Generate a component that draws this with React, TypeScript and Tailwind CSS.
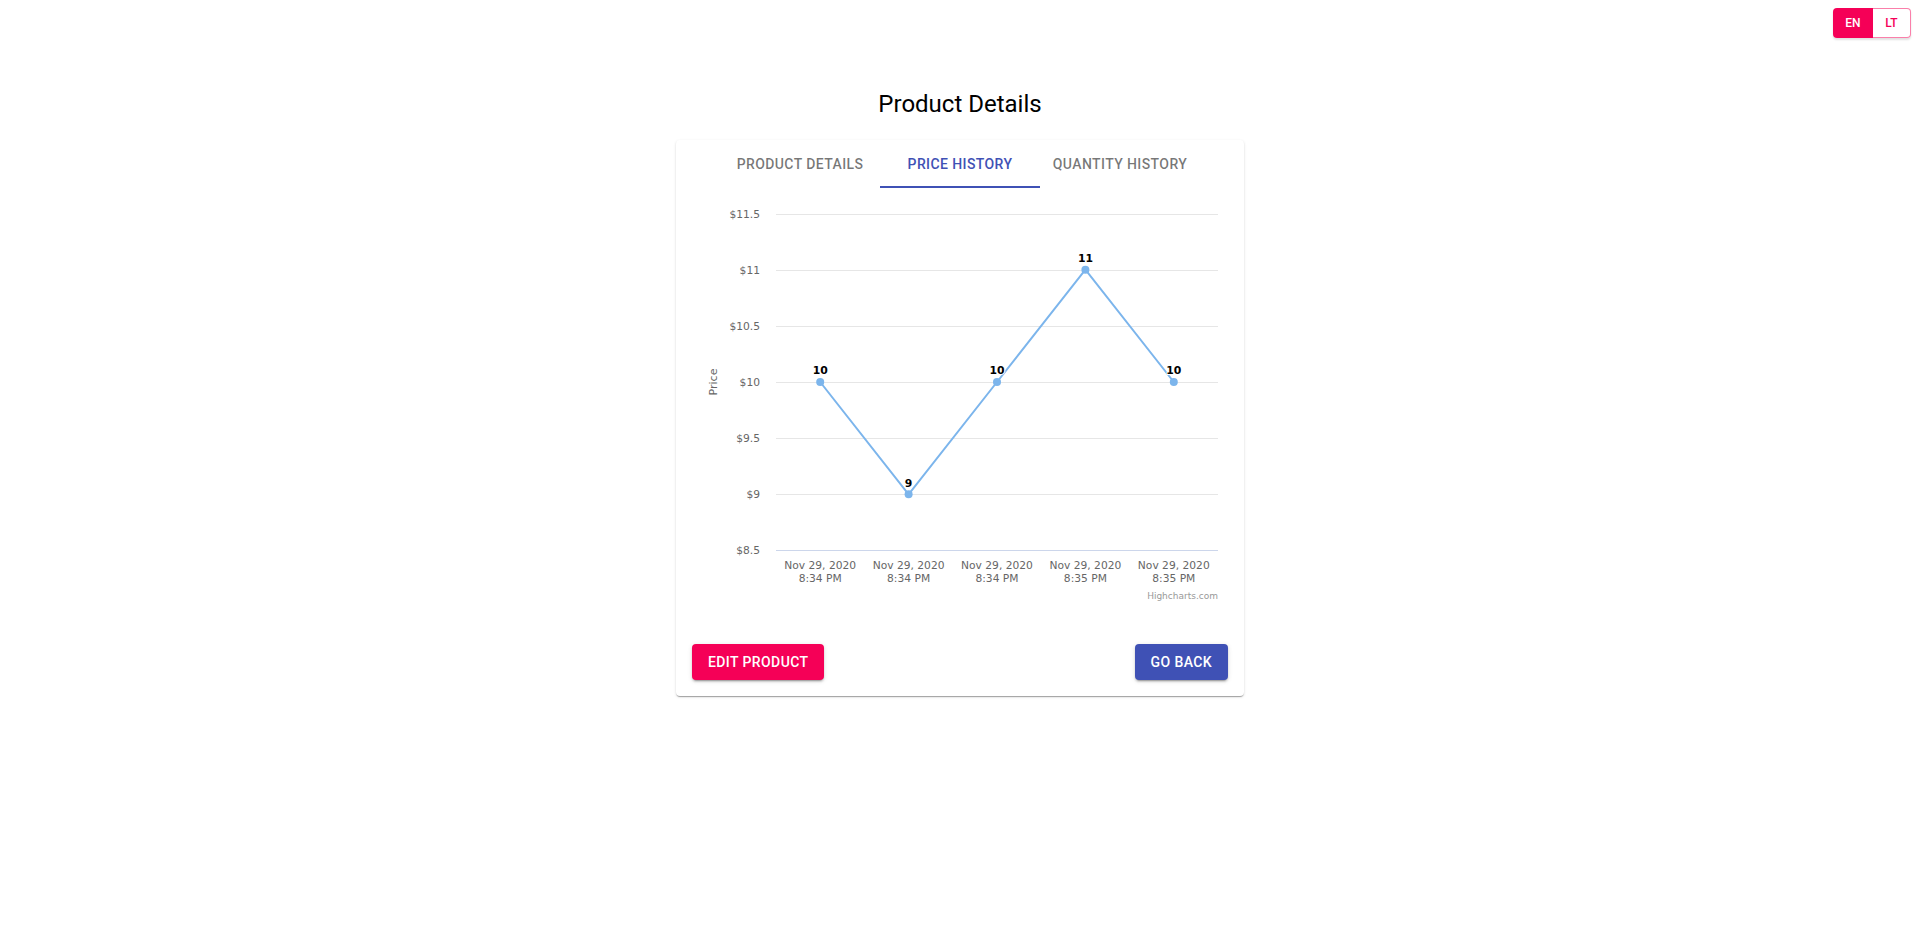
import React from "react";

const PLOT_LEFT = 84;
const PLOT_RIGHT = 526;
const yOf = (v: number) => 9.5 + (11.5 - v) * 112.33;
const xOf = (i: number) => PLOT_LEFT + 44.2 + i * 88.4;

const ticks = [11.5, 11, 10.5, 10, 9.5, 9, 8.5];
const points = [
  { v: 10, date: "Nov 29, 2020", time: "8:34 PM" },
  { v: 9, date: "Nov 29, 2020", time: "8:34 PM" },
  { v: 10, date: "Nov 29, 2020", time: "8:34 PM" },
  { v: 11, date: "Nov 29, 2020", time: "8:35 PM" },
  { v: 10, date: "Nov 29, 2020", time: "8:35 PM" },
];

const chartFont = '"DejaVu Sans", Verdana, sans-serif';

const PriceChart = () => {
  const path = points.map((p, i) => `${i === 0 ? "M" : "L"} ${xOf(i)} ${yOf(p.v)}`).join(" ");
  return (
    <svg width={536} height={400} viewBox="0 0 536 400" style={{ fontFamily: chartFont }}>
      {ticks.map((t) => (
        <g key={t}>
          <line
            x1={PLOT_LEFT}
            x2={PLOT_RIGHT}
            y1={Math.round(yOf(t)) + 0.5}
            y2={Math.round(yOf(t)) + 0.5}
            stroke={t === 8.5 ? "#ccd6eb" : "#e6e6e6"}
            strokeWidth={1}
          />
          <text x={68} y={yOf(t) + 4} textAnchor="end" fontSize="10.7" fill="#666666">
            ${t}
          </text>
        </g>
      ))}
      <text
        x={0}
        y={0}
        transform={`translate(25 ${yOf(10)}) rotate(-90)`}
        textAnchor="middle"
        fontSize="11"
        fill="#666666"
      >
        Price
      </text>
      <path d={path} fill="none" stroke="#7cb5ec" strokeWidth={2} strokeLinejoin="round" />
      {points.map((p, i) => (
        <g key={i}>
          <circle cx={xOf(i)} cy={yOf(p.v)} r={4} fill="#7cb5ec" />
          <text
            x={xOf(i)}
            y={yOf(p.v) - 7.5}
            textAnchor="middle"
            fontSize="10.8"
            fontWeight="bold"
            fill="#000000"
            stroke="#ffffff"
            strokeWidth={2}
            paintOrder="stroke"
          >
            {p.v}
          </text>
          <text x={xOf(i)} y={365} textAnchor="middle" fontSize="10.7" fill="#666666">
            {p.date}
          </text>
          <text x={xOf(i)} y={378} textAnchor="middle" fontSize="10.7" fill="#666666">
            {p.time}
          </text>
        </g>
      ))}
      <text x={526} y={395} textAnchor="end" fontSize="9" fill="#999999">
        Highcharts.com
      </text>
    </svg>
  );
};

const tabs = ["Product Details", "Price History", "Quantity History"];

export default function App() {
  return (
    <div className="min-h-screen bg-white font-['Roboto',sans-serif] text-[rgba(0,0,0,0.87)]">
      <div className="flex justify-end pt-2 pr-[9px]">
        <div className="flex h-[30px] rounded shadow-[0_2px_2px_rgba(0,0,0,0.12)]">
          <button className="w-10 rounded-l bg-[#f50057] text-[12px] font-medium text-white">EN</button>
          <button className="w-[38px] rounded-r border border-l-0 border-[rgba(245,0,87,0.5)] bg-white text-[12px] font-medium text-[#f50057]">
            LT
          </button>
        </div>
      </div>

      <h1 className="mt-[50px] text-center text-[24px] leading-8 font-normal text-black">Product Details</h1>

      <div className="mx-auto mt-5 w-[568px] rounded bg-white shadow-[0_2px_1px_-1px_rgba(0,0,0,0.2),0_1px_1px_0_rgba(0,0,0,0.14),0_1px_3px_0_rgba(0,0,0,0.12)]">
        <div className="flex h-12 justify-center">
          {tabs.map((t, i) => (
            <div
              key={t}
              className={
                i === 1
                  ? "flex w-40 items-center justify-center border-b-2 border-[#3f51b5] pt-[2px] text-[14px] font-medium tracking-[0.4px] text-[#3f51b5] uppercase"
                  : "flex w-40 items-center justify-center border-b-2 border-transparent pt-[2px] text-[14px] font-medium tracking-[0.4px] text-[rgba(0,0,0,0.54)] uppercase"
              }
            >
              {t}
            </div>
          ))}
        </div>

        <div className="px-4 pt-4">
          <PriceChart />
        </div>

        <div className="flex justify-between px-4 pt-10 pb-4">
          <button className="h-9 rounded bg-[#f50057] px-4 text-[14px] font-medium tracking-[0.4px] text-white uppercase shadow-[0_3px_1px_-2px_rgba(0,0,0,0.2),0_2px_2px_0_rgba(0,0,0,0.14),0_1px_5px_0_rgba(0,0,0,0.12)]">
            Edit Product
          </button>
          <button className="h-9 rounded bg-[#3f51b5] px-4 text-[14px] font-medium tracking-[0.4px] text-white uppercase shadow-[0_3px_1px_-2px_rgba(0,0,0,0.2),0_2px_2px_0_rgba(0,0,0,0.14),0_1px_5px_0_rgba(0,0,0,0.12)]">
            Go Back
          </button>
        </div>
      </div>
    </div>
  );
}
